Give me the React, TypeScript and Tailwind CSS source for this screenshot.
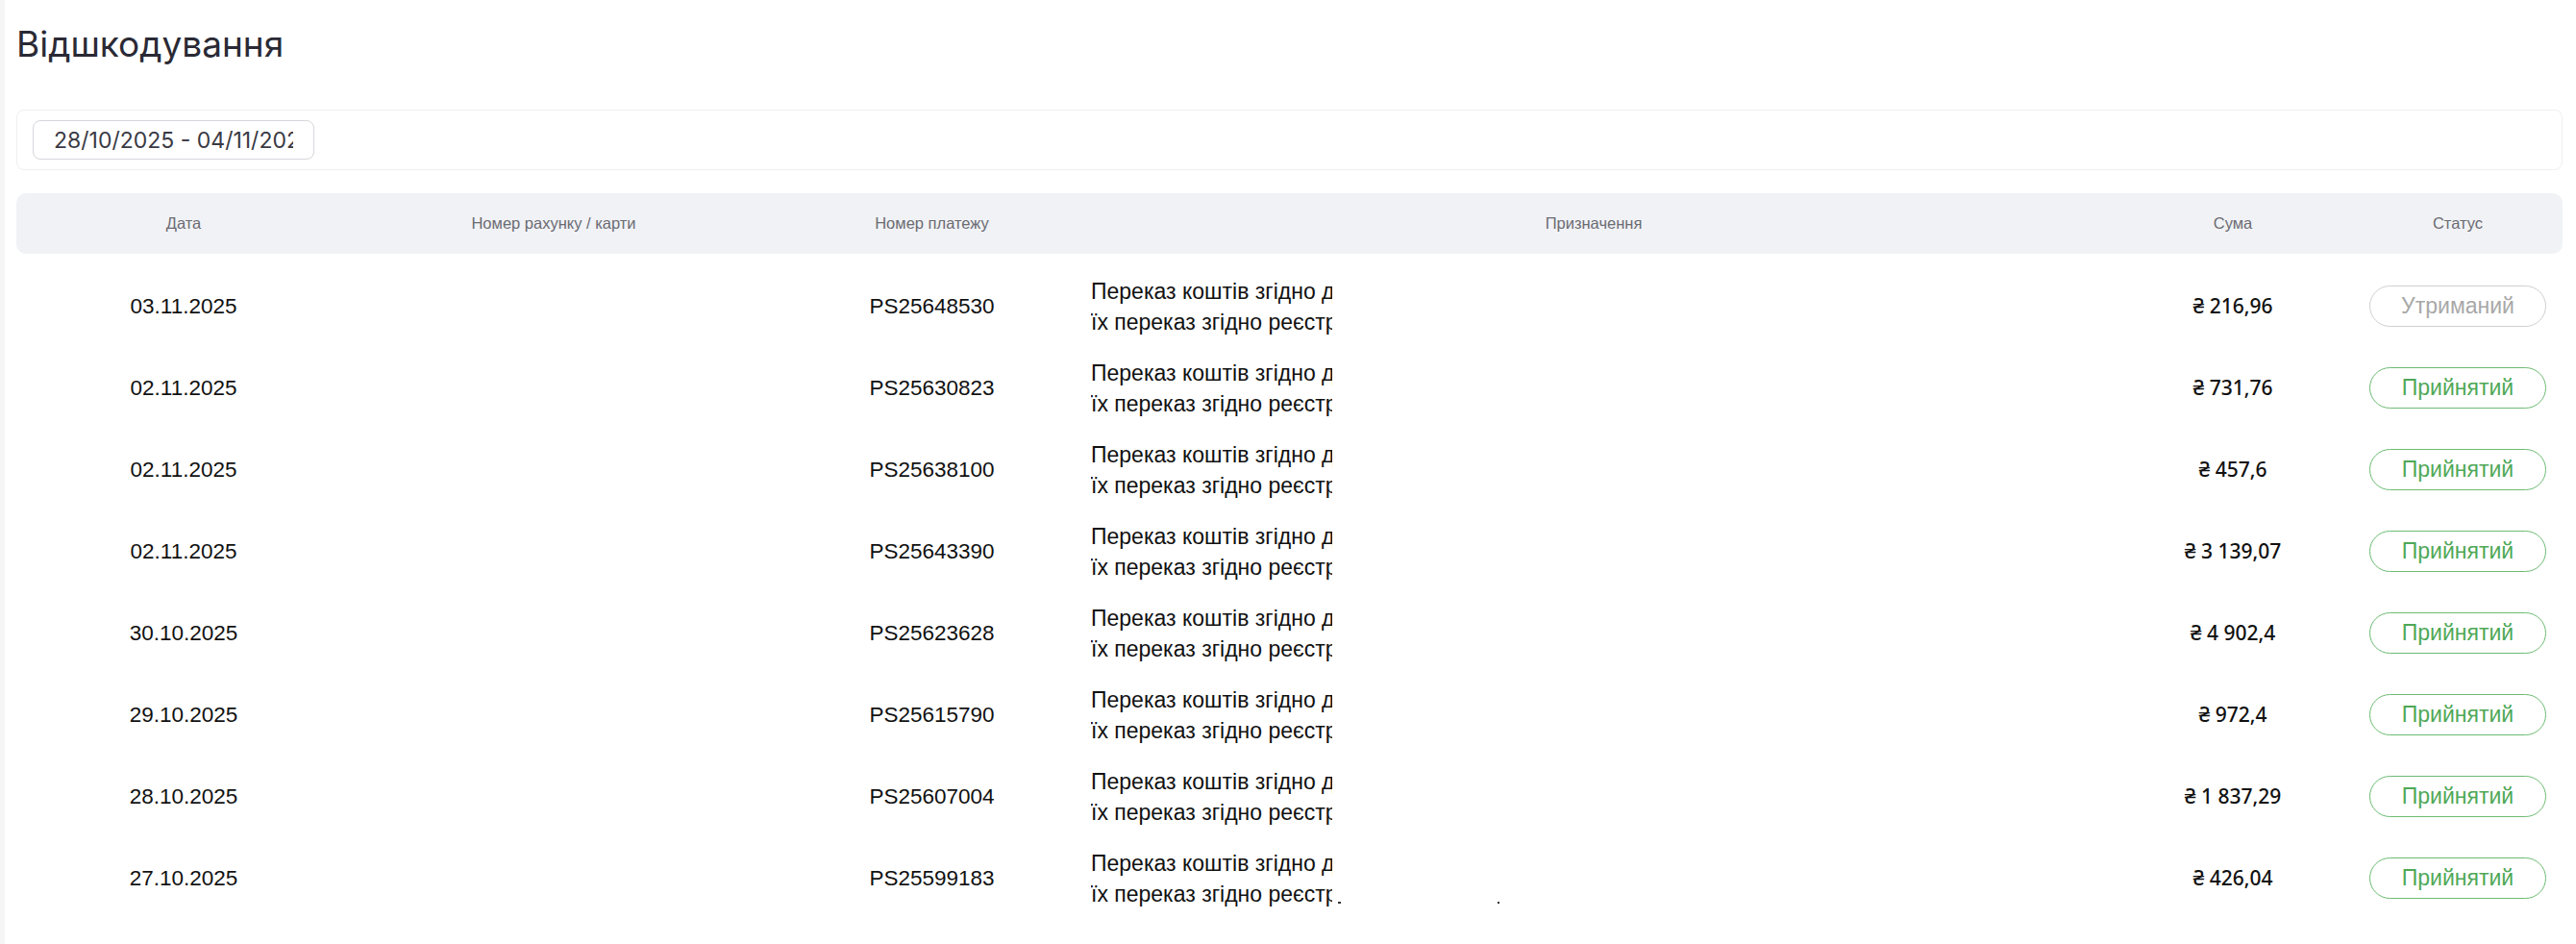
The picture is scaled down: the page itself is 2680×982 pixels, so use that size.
import React from "react";

type Row = {
  date: string;
  payment: string;
  amount: string;
  status: "held" | "accepted";
};

const rows: Row[] = [
  { date: "03.11.2025", payment: "PS25648530", amount: "₴ 216,96", status: "held" },
  { date: "02.11.2025", payment: "PS25630823", amount: "₴ 731,76", status: "accepted" },
  { date: "02.11.2025", payment: "PS25638100", amount: "₴ 457,6", status: "accepted" },
  { date: "02.11.2025", payment: "PS25643390", amount: "₴ 3 139,07", status: "accepted" },
  { date: "30.10.2025", payment: "PS25623628", amount: "₴ 4 902,4", status: "accepted" },
  { date: "29.10.2025", payment: "PS25615790", amount: "₴ 972,4", status: "accepted" },
  { date: "28.10.2025", payment: "PS25607004", amount: "₴ 1 837,29", status: "accepted" },
  { date: "27.10.2025", payment: "PS25599183", amount: "₴ 426,04", status: "accepted" },
];

const cols = "grid grid-cols-[314px_456px_331px_1046px_284px_184px] px-[17px]";

const StatusBadge = ({ status }: { status: Row["status"] }) =>
  status === "held" ? (
    <span className="flex h-[43px] w-full items-center justify-center rounded-full border border-[#cfcfcf] text-[23px] text-[#a8a8a8]">
      Утриманий
    </span>
  ) : (
    <span className="flex h-[43px] w-full items-center justify-center rounded-full border border-[#6cbb72] text-[23px] text-[#4fa857]">
      Прийнятий
    </span>
  );

const App = () => {
  return (
    <div className="flex min-h-screen bg-white font-['Liberation_Sans',Arial,sans-serif]">
      {/* left edge */}
      <div className="w-[5px] shrink-0 bg-[#f5f5f6]"></div>

      <div className="flex-1 pl-3 pr-[14px] pt-[22px] pb-6">
        {/* Title */}
        <h1 className="font-['Inter',sans-serif] text-[37px] leading-[48px] text-[#2a2a35]">
          Відшкодування
        </h1>

        {/* Filters */}
        <div className="mt-[44px] rounded-lg border border-[#efefef] px-4 py-[10px]">
          <input
            readOnly
            value="28/10/2025 - 04/11/2025"
            className="h-[41px] w-[293px] rounded-lg border border-[#d6d6dc] px-[21px] font-['Inter',sans-serif] text-[23px] text-[#3a3a44] outline-none"
          />
        </div>

        {/* Table header */}
        <div className={`${cols} mt-6 h-[63px] items-center rounded-[10px] bg-[#f1f2f6] text-center text-[16.5px] text-[#6b6b72]`}>
          <p>Дата</p>
          <p>Номер рахунку / карти</p>
          <p>Номер платежу</p>
          <p>Призначення</p>
          <p>Сума</p>
          <p>Статус</p>
        </div>

        {/* Table rows */}
        <div className="mt-3">
          {rows.map((row, i) => (
            <div key={row.payment} className={`${cols} h-[85px] items-center text-[22.5px] text-[#111111]`}>
              <p className="text-center">{row.date}</p>
              <p></p>
              <p className="text-center">{row.payment}</p>
              <div className="flex items-end">
                <div className="w-[251px] overflow-hidden whitespace-nowrap text-[23px] leading-[32px]">
                  <p>Переказ коштів згідно договору про прийняття платежів та</p>
                  <p>їх переказ згідно реєстру платежів</p>
                </div>
                {i === rows.length - 1 && (
                  <div className="mb-[6px] flex items-end">
                    <span className="ml-[6px] h-[2px] w-[3px] bg-[#333]"></span>
                    <span className="ml-[163px] h-[2px] w-[2px] bg-[#333]"></span>
                  </div>
                )}
              </div>
              <p className="text-center font-['Noto_Sans',sans-serif] text-[21px] font-medium">{row.amount}</p>
              <StatusBadge status={row.status} />
            </div>
          ))}
        </div>
      </div>
    </div>
  );
};

export default App;
